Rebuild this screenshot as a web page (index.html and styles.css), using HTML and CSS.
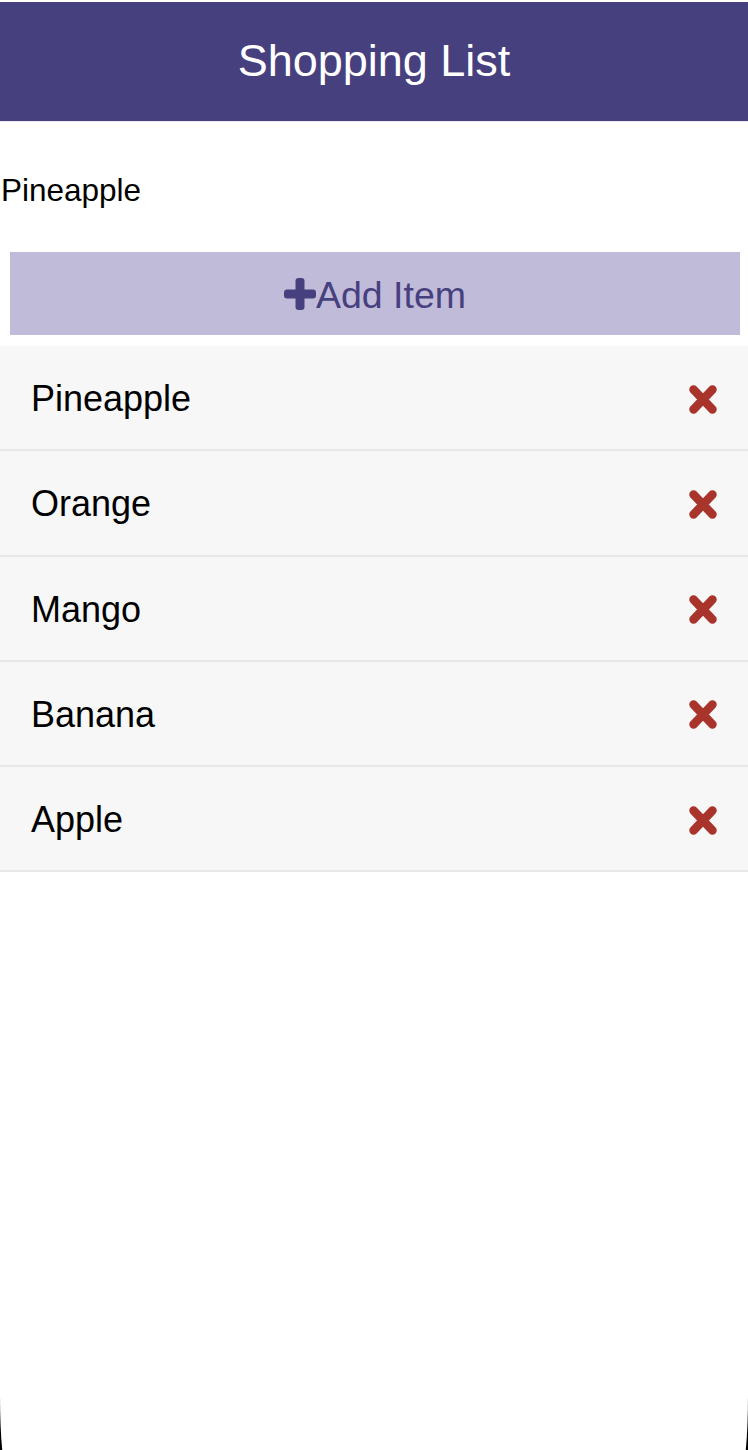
FILE: index.html
```html
<!DOCTYPE html>
<html lang="en">
<head>
<meta charset="utf-8">
<title>Shopping List</title>
<link rel="stylesheet" href="styles.css">
</head>
<body>
<div class="screen">
  <header class="app-header">
    <h1 class="title">Shopping List</h1>
  </header>
  <div class="entry">Pineapple</div>
  <button class="add-btn" type="button">
    <svg class="plus" width="32" height="32" viewBox="0 0 32 32" aria-hidden="true">
      <rect x="11.5" y="0" width="9" height="32" rx="3" fill="#47407F"/>
      <rect x="0" y="11.5" width="32" height="9" rx="3" fill="#47407F"/>
    </svg><span>Add Item</span>
  </button>
  <ul class="list">
    <li class="row"><span class="name">Pineapple</span><svg class="del" width="28" height="29" viewBox="0 0 28 29" aria-hidden="true"><path d="M4.5 4.5 L23.5 24.5 M23.5 4.5 L4.5 24.5" stroke="#A9342C" stroke-width="8.5" stroke-linecap="round"/></svg></li>
    <li class="row"><span class="name">Orange</span><svg class="del" width="28" height="29" viewBox="0 0 28 29" aria-hidden="true"><path d="M4.5 4.5 L23.5 24.5 M23.5 4.5 L4.5 24.5" stroke="#A9342C" stroke-width="8.5" stroke-linecap="round"/></svg></li>
    <li class="row"><span class="name">Mango</span><svg class="del" width="28" height="29" viewBox="0 0 28 29" aria-hidden="true"><path d="M4.5 4.5 L23.5 24.5 M23.5 4.5 L4.5 24.5" stroke="#A9342C" stroke-width="8.5" stroke-linecap="round"/></svg></li>
    <li class="row"><span class="name">Banana</span><svg class="del" width="28" height="29" viewBox="0 0 28 29" aria-hidden="true"><path d="M4.5 4.5 L23.5 24.5 M23.5 4.5 L4.5 24.5" stroke="#A9342C" stroke-width="8.5" stroke-linecap="round"/></svg></li>
    <li class="row"><span class="name">Apple</span><svg class="del" width="28" height="29" viewBox="0 0 28 29" aria-hidden="true"><path d="M4.5 4.5 L23.5 24.5 M23.5 4.5 L4.5 24.5" stroke="#A9342C" stroke-width="8.5" stroke-linecap="round"/></svg></li>
  </ul>
</div>
</body>
</html>
```

FILE: styles.css
```css
html {
  height: 100%;
  overflow: hidden;
  background: #000;
}
body {
  margin: 0;
  font-family: "Liberation Sans", Arial, sans-serif;
  color: #000;
}
.screen {
  height: 1470px;
  background: #fff;
  border-bottom-left-radius: 7px 75px;
  border-bottom-right-radius: 7px 75px;
  padding-top: 2px;
  box-sizing: border-box;
  display: flex;
  flex-direction: column;
}
.app-header {
  background: #47407F;
  height: 119px;
  display: flex;
  align-items: center;
  justify-content: center;
  border-bottom: 1px solid #e9e8f0;
}
.title {
  margin: 0;
  color: #fff;
  font-weight: 400;
  font-size: 45px;
  line-height: 1;
  padding-bottom: 3px;
}
.entry {
  height: 130px;
  box-sizing: border-box;
  padding: 6px 0 0 1px;
  display: flex;
  align-items: center;
  font-size: 31.5px;
}
.add-btn {
  margin: 0 8px 0 10px;
  height: 83px;
  border: 0;
  background: #C0BBD9;
  color: #47407F;
  font-family: inherit;
  font-size: 37.5px;
  display: flex;
  align-items: center;
  justify-content: center;
  padding: 3px 0 0 0;
}
.plus {
  display: block;
  margin-right: 0;
  margin-top: -2px;
}
.list {
  list-style: none;
  margin: 11px 0 0;
  padding: 0;
}
.row {
  height: 103.25px;
  background: #F7F7F7;
  border-bottom: 2px solid #E8E8E8;
  display: flex;
  align-items: center;
  justify-content: space-between;
  padding: 0 31px 0 31px;
  font-size: 36px;
}
.name {
  line-height: 1;
  padding-top: 3px;
}
.del {
  display: block;
  margin-top: 3px;
}
```
